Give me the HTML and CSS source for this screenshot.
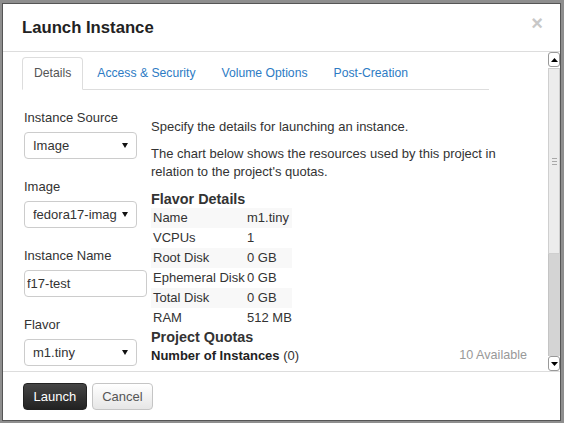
FILE: index.html
```html
<!DOCTYPE html>
<html>
<head>
<meta charset="utf-8">
<link rel="stylesheet" href="styles.css">
</head>
<body>
<div class="modal">
  <div class="modal-header">
    <h3 class="title">Launch Instance</h3>
    <span class="close">×</span>
  </div>
  <div class="modal-body">
    <div class="scroll-content">
      <ul class="tabs">
        <li class="tab active">Details</li>
        <li class="tab">Access &amp; Security</li>
        <li class="tab">Volume Options</li>
        <li class="tab">Post-Creation</li>
      </ul>
      <div class="pane">
        <div class="form-col">
          <div class="field">
            <label>Instance Source</label>
            <div class="select"><span class="sel-text">Image</span><svg viewBox="0 0 6 5"><polygon points="0,0 6,0 3,5" fill="#111"/></svg></div>
          </div>
          <div class="field">
            <label>Image</label>
            <div class="select"><span class="sel-text">fedora17-imag</span><svg viewBox="0 0 6 5"><polygon points="0,0 6,0 3,5" fill="#111"/></svg></div>
          </div>
          <div class="field">
            <label>Instance Name</label>
            <input class="input" type="text" value="f17-test">
          </div>
          <div class="field">
            <label>Flavor</label>
            <div class="select"><span class="sel-text">m1.tiny</span><svg viewBox="0 0 6 5"><polygon points="0,0 6,0 3,5" fill="#111"/></svg></div>
          </div>
        </div>
        <div class="info-col">
          <p>Specify the details for launching an instance.</p>
          <p>The chart below shows the resources used by this project in relation to the project's quotas.</p>
          <h4 class="heading flavor-heading">Flavor Details</h4>
          <table class="flavor-table">
            <colgroup><col class="c1"><col class="c2"></colgroup>
            <tr><td>Name</td><td>m1.tiny</td></tr>
            <tr><td>VCPUs</td><td>1</td></tr>
            <tr><td>Root Disk</td><td>0 GB</td></tr>
            <tr><td>Ephemeral Disk</td><td>0 GB</td></tr>
            <tr><td>Total Disk</td><td>0 GB</td></tr>
            <tr><td>RAM</td><td>512 MB</td></tr>
          </table>
          <h4 class="heading">Project Quotas</h4>
          <div class="quota"><span><strong>Number of Instances</strong> (0)</span><span class="avail">10 Available</span></div>
        </div>
      </div>
    </div>
    <div class="scrollbar">
      <div class="sb-btn"><svg viewBox="0 0 7 4" class="sb-arrow"><polygon points="0,4 7,4 3.5,0" fill="#000"/></svg></div>
      <div class="sb-thumb"><svg viewBox="0 0 5 7" class="grip"><path d="M0 .5H5M0 3.5H5M0 6.5H5" stroke="#a8a8a8" stroke-width="1"/></svg></div>
      <div class="sb-track"></div>
      <div class="sb-btn"><svg viewBox="0 0 7 4" class="sb-arrow"><polygon points="0,0 7,0 3.5,4" fill="#000"/></svg></div>
    </div>
  </div>
  <div class="modal-footer">
    <button class="btn btn-primary">Launch</button>
    <button class="btn">Cancel</button>
  </div>
</div>
</body>
</html>
```
FILE: styles.css
```css
body {
  margin: 0;
  background: #8e8e8e;
  font-family: "Liberation Sans", Arial, sans-serif;
  font-size: 13px;
  color: #333;
}

.modal {
  box-sizing: border-box;
  width: 559px;
  height: 418px;
  margin: 3px 0 0 2px;
  background: #fff;
  border: 1px solid #555;
  display: flex;
  flex-direction: column;
  overflow: hidden;
}

.modal-header {
  flex: none;
  height: 47px;
  border-bottom: 1px solid #ddd;
  display: flex;
  align-items: center;
  justify-content: space-between;
  padding: 0 17px 0 19px;
}

.title {
  margin: 0;
  font-size: 16.7px;
  font-weight: bold;
  line-height: 47px;
  color: #222;
}

.close {
  font-size: 20px;
  font-weight: bold;
  line-height: 20px;
  color: #c8c8c8;
  margin-bottom: 10px;
}

.modal-body {
  flex: none;
  height: 319px;
  display: flex;
}

.scroll-content {
  flex: 1;
  overflow: hidden;
  padding: 5px 21px 0 19px;
}

.tabs {
  list-style: none;
  margin: 0;
  padding: 0;
  display: flex;
  width: 467px;
  border-bottom: 1px solid #ddd;
}

.tab {
  font-size: 12.2px;
  line-height: 31px;
  padding: 0 11px;
  border: 1px solid transparent;
  border-radius: 4px 4px 0 0;
  margin: 0 2px -1px 0;
  color: #2d7bc4;
}

.tab.active {
  border-color: #ddd #ddd #fff;
  background: #fff;
  color: #555;
}

.pane {
  display: flex;
  margin-top: 18px;
}

.form-col {
  flex: none;
  width: 127px;
  padding-left: 2px;
}

.field {
  margin-bottom: 18px;
}

.field label {
  display: block;
  line-height: 19px;
  margin-bottom: 5px;
}

.select {
  box-sizing: border-box;
  width: 113px;
  height: 27px;
  border: 1px solid #ccc;
  border-radius: 4px;
  display: flex;
  align-items: center;
  padding: 0 8px;
}

.sel-text {
  flex: 1;
  overflow: hidden;
  white-space: nowrap;
}

.select svg {
  flex: none;
  width: 6px;
  height: 5px;
  margin-left: 5px;
}

.input {
  box-sizing: border-box;
  display: block;
  width: 123px;
  height: 27px;
  border: 1px solid #ccc;
  border-radius: 4px;
  padding: 0 2px;
  font: inherit;
  color: #333;
  outline: none;
}

.info-col {
  flex: 1;
  padding-top: 10px;
}

.info-col p {
  margin: 0 0 9px;
  line-height: 18px;
}

.heading {
  margin: 0;
  font-size: 14.4px;
  line-height: 18px;
  font-weight: bold;
  color: #333;
}

.flavor-heading {
  margin-top: 1px;
}

.flavor-table {
  border-collapse: collapse;
  border-spacing: 0;
  table-layout: fixed;
  width: 141px;
}

.flavor-table .c1 {
  width: 94px;
}

.flavor-table td {
  padding: 0 0 0 2px;
  height: 20px;
  line-height: 20px;
  white-space: nowrap;
}

.flavor-table tr:nth-child(odd) td {
  background: #f8f8f8;
}

.quota {
  display: flex;
  justify-content: space-between;
  line-height: 19px;
  font-size: 13px;
}

.quota strong {
  font-size: 13px;
  color: #222;
}

.avail {
  color: #999;
  font-size: 12.6px;
}

.scrollbar {
  flex: none;
  width: 12px;
  display: flex;
  flex-direction: column;
}

.sb-btn {
  box-sizing: border-box;
  flex: none;
  height: 15px;
  border: 1px solid #999;
  border-radius: 3px;
  background: #fff;
  display: flex;
  align-items: center;
  justify-content: center;
}

.sb-arrow {
  width: 7px;
  height: 4px;
}

.sb-thumb {
  box-sizing: border-box;
  flex: none;
  height: 186px;
  margin-top: 1px;
  background: #ececec;
  border: 1px solid #cfcfcf;
  display: flex;
  align-items: center;
  justify-content: center;
}

.grip {
  width: 5px;
  height: 7px;
}

.sb-track {
  flex: 1;
  background: #d4d4d4;
  border-left: 1px solid #c4c4c4;
}

.modal-footer {
  flex: 1;
  border-top: 1px solid #ddd;
  padding: 11px 20px 0;
  display: flex;
  align-items: flex-start;
  gap: 5px;
}

.btn {
  box-sizing: border-box;
  height: 27px;
  padding: 0 9.5px;
  font: 13px "Liberation Sans", Arial, sans-serif;
  border-radius: 4px;
  border: 1px solid #c5c5c5;
  background: linear-gradient(#ffffff, #e6e6e6);
  color: #555;
}

.btn-primary {
  background: linear-gradient(#454545, #222222);
  border-color: #222;
  color: #fff;
}
```
